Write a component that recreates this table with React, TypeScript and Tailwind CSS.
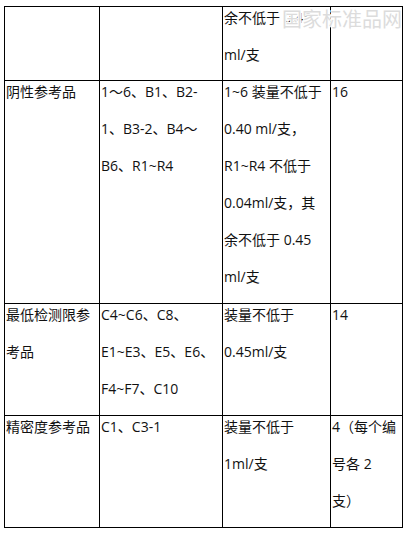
import React from "react";

type Row = { cells: string[][]; first?: boolean };

const rows: Row[] = [
  {
    first: true,
    cells: [[], [], ["余不低于 0.45", "ml/支"], []],
  },
  {
    cells: [
      ["阴性参考品"],
      ["1～6、B1、B2-", "1、B3-2、B4～", "B6、R1~R4"],
      ["1~6 装量不低于", "0.40 ml/支，", "R1~R4 不低于", "0.04ml/支，其", "余不低于 0.45", "ml/支"],
      ["16"],
    ],
  },
  {
    cells: [
      ["最低检测限参", "考品"],
      ["C4~C6、C8、", "E1~E3、E5、E6、", "F4~F7、C10"],
      ["装量不低于", "0.45ml/支"],
      ["14"],
    ],
  },
  {
    cells: [
      ["精密度参考品"],
      ["C1、C3-1"],
      ["装量不低于", "1ml/支"],
      ["4（每个编", "号各 2", "支）"],
    ],
  },
];

const App = () => {
  return (
    <div
      className="relative w-[408px] h-[533px] bg-white pt-[6px] pl-[4px] text-[14px] text-[#111] overflow-hidden"
      style={{ fontFamily: '"Open Sans", "Noto Sans CJK SC", sans-serif' }}
    >
      <div className="grid grid-cols-[95px_123px_108px_72px] w-fit border-t border-l border-black">
        {rows.map((row, ri) =>
          row.cells.map((lines, ci) => (
            <div
              key={`${ri}-${ci}`}
              className={`border-r border-b border-black pl-[1px] ${row.first ? "h-[74px] pb-[9px]" : "pb-[8px]"}`}
            >
              <div className={`leading-[37px] whitespace-nowrap ${row.first ? "-mt-[8px]" : "-mt-[8px]"}`}>
                {lines.map((l, li) => (
                  <div key={li}>{l}</div>
                ))}
              </div>
            </div>
          ))
        )}
      </div>

      {/* watermark */}
      <div
        className="absolute left-[282px] top-[8px] text-[20px] leading-[24px] text-[#dcdcdc] pointer-events-none"
        style={{
          textShadow:
            "1px 0 rgba(255,255,255,.85), -1px 0 rgba(255,255,255,.85), 0 1px rgba(255,255,255,.85), 0 -1px rgba(255,255,255,.85), 1px 1px rgba(255,255,255,.85), -1px -1px rgba(255,255,255,.85)",
        }}
      >
        国家标准品网
      </div>
    </div>
  );
};

export default App;
